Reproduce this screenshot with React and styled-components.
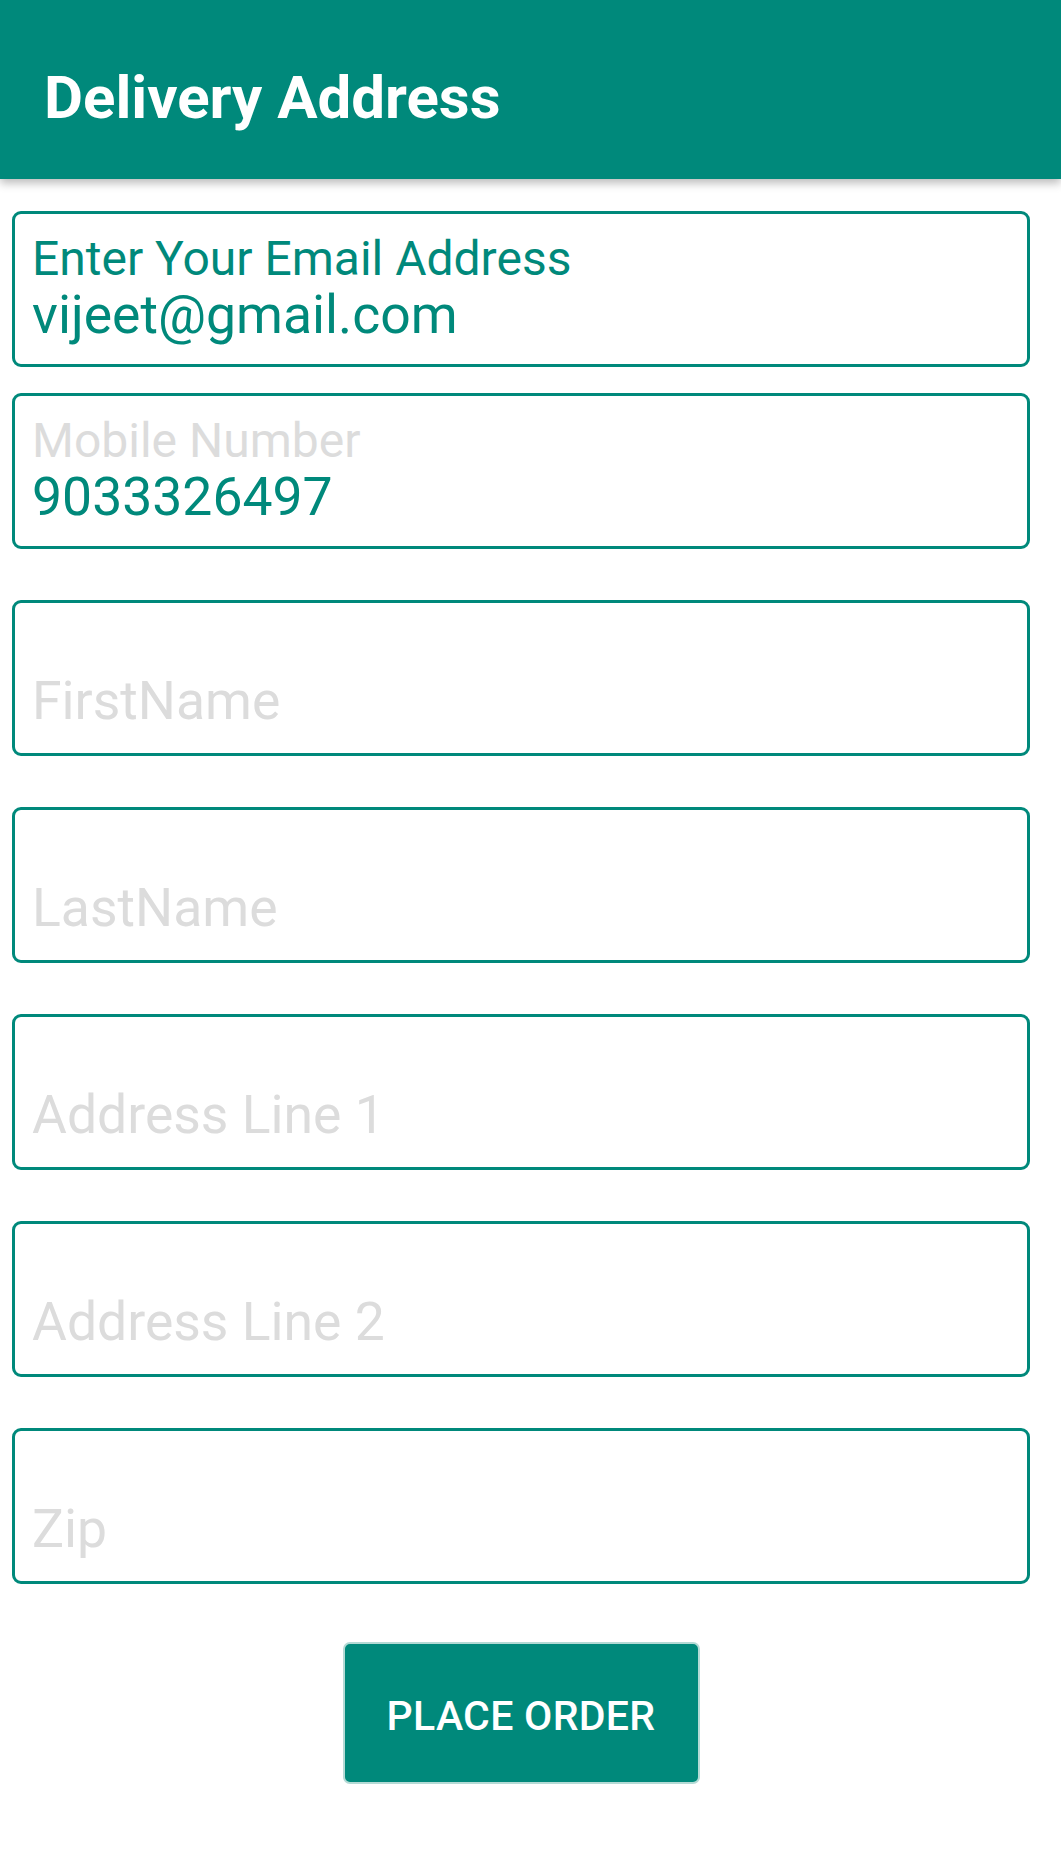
import React from 'react';
import styled, {createGlobalStyle} from 'styled-components';

const TEAL = '#00897B';
const HINT = '#DCDCDC';

const fields = [
	{label: 'Enter Your Email Address', value: 'vijeet@gmail.com', active: true, gap: 32},
	{label: 'Mobile Number', value: '9033326497', gap: 26},
	{placeholder: 'FirstName', gap: 51},
	{placeholder: 'LastName', gap: 51},
	{placeholder: 'Address Line 1', gap: 51},
	{placeholder: 'Address Line 2', gap: 51},
	{placeholder: 'Zip', gap: 51}
];

const App = () => (
	<Page>
		<GlobalStyle />
		<AppBar>
			<Title>Delivery Address</Title>
		</AppBar>

		<Form>
			{fields.map(f => (
				<Field key={f.label || f.placeholder} $gap={f.gap}>
					<Label $active={f.active}>{f.label || ''}</Label>
					<Input
						type="text"
						defaultValue={f.value}
						placeholder={f.placeholder}
						$empty={!f.value}
						readOnly
					/>
				</Field>
			))}

			<ButtonRow>
				<PlaceOrder>Place Order</PlaceOrder>
			</ButtonRow>
		</Form>
	</Page>
);

export default App;

const GlobalStyle = createGlobalStyle`
	html, body {
		margin: 0;
		padding: 0;
		background: #fff;
	}
	body {
		font-family: Roboto, "Liberation Sans", sans-serif;
	}
	* {
		box-sizing: border-box;
	}
`;

const Page = styled.div`
	width: 1061px;
	min-height: 1871px;
	background: #fff;
`;

const AppBar = styled.header`
	height: 179px;
	background: ${TEAL};
	box-shadow: 0 4px 9px rgba(0, 0, 0, 0.28);
	padding: 64px 0 0 44px;
	position: relative;
	z-index: 1;
`;

const Title = styled.h1`
	margin: 0;
	color: #fff;
	font-size: 60px;
	line-height: 68px;
	font-weight: 700;
`;

const Form = styled.div`
	display: flex;
	flex-direction: column;
	margin: 0 31px 0 12px;
`;

const Field = styled.div`
	margin-top: ${p => p.$gap}px;
	height: 156px;
	border: 3px solid ${TEAL};
	border-radius: 9px;
	padding: 17px 17px 0 17px;
	display: flex;
	flex-direction: column;
`;

const Label = styled.label`
	display: block;
	height: 56px;
	font-size: 48px;
	line-height: 56px;
	color: ${p => (p.$active ? TEAL : HINT)};
	white-space: nowrap;
`;

const Input = styled.input`
	display: block;
	width: 100%;
	height: 66px;
	margin: ${p => (p.$empty ? '-9px' : '-6px')} 0 0 0;
	padding: 0;
	border: none;
	outline: none;
	background: transparent;
	font-family: Roboto, "Liberation Sans", sans-serif;
	font-size: 53.5px;
	color: ${TEAL};

	&::placeholder {
		color: ${HINT};
		opacity: 1;
	}
`;

const ButtonRow = styled.div`
	display: flex;
	justify-content: center;
	margin-top: 58px;
`;

const PlaceOrder = styled.button`
	width: 357px;
	height: 142px;
	background: ${TEAL};
	border: 2px solid #b4dad5;
	border-radius: 7px;
	color: #fff;
	font-family: Roboto, "Liberation Sans", sans-serif;
	font-size: 41px;
	font-weight: 500;
	letter-spacing: 0.3px;
	text-transform: uppercase;
	padding: 6px 0 0 0;
	cursor: pointer;
`;
